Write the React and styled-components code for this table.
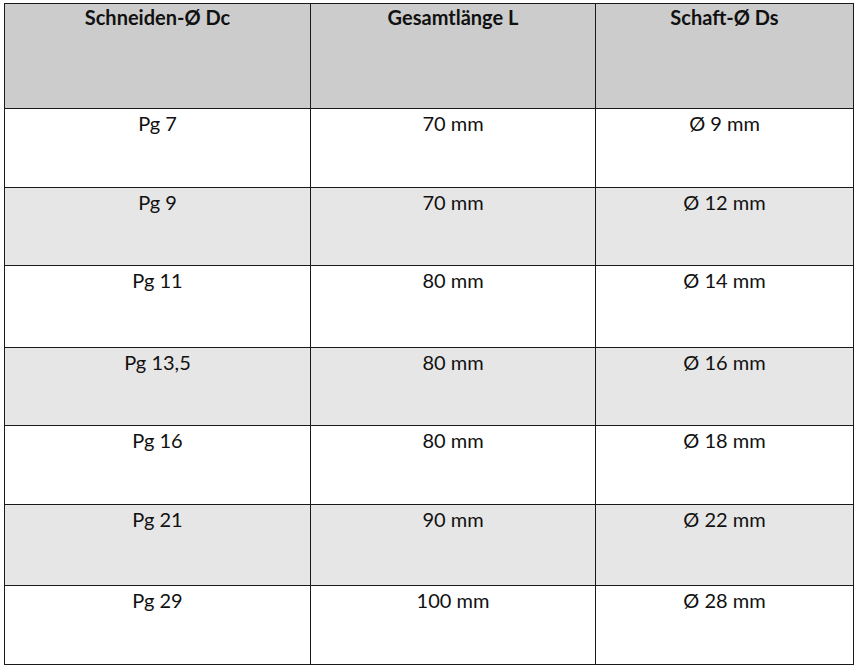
import React from "react";
import styled, { createGlobalStyle } from "styled-components";

const GlobalStyle = createGlobalStyle`
  body {
    margin: 0;
    background: #ffffff;
    font-family: Lato, "Liberation Sans", sans-serif;
    color: #111111;
  }
`;

const rows = [
  { dc: "Pg 7", l: "70 mm", ds: "Ø 9 mm", h: 79 },
  { dc: "Pg 9", l: "70 mm", ds: "Ø 12 mm", h: 78 },
  { dc: "Pg 11", l: "80 mm", ds: "Ø 14 mm", h: 82 },
  { dc: "Pg 13,5", l: "80 mm", ds: "Ø 16 mm", h: 78 },
  { dc: "Pg 16", l: "80 mm", ds: "Ø 18 mm", h: 79 },
  { dc: "Pg 21", l: "90 mm", ds: "Ø 22 mm", h: 81 },
  { dc: "Pg 29", l: "100 mm", ds: "Ø 28 mm", h: 79 },
];

const App = () => {
  return (
    <>
      <GlobalStyle />
      <Wrapper>
        <Table>
          <colgroup>
            <col style={{ width: 306 }} />
            <col style={{ width: 285 }} />
            <col style={{ width: 258 }} />
          </colgroup>
          <thead>
            <HeadRow>
              <HeadCell>Schneiden-Ø Dc</HeadCell>
              <HeadCell>Gesamtlänge L</HeadCell>
              <HeadCell>Schaft-Ø Ds</HeadCell>
            </HeadRow>
          </thead>
          <tbody>
            {rows.map((r, i) => (
              <BodyRow key={r.dc} $alt={i % 2 === 1} style={{ height: r.h }}>
                <Cell>{r.dc}</Cell>
                <Cell>{r.l}</Cell>
                <Cell>{r.ds}</Cell>
              </BodyRow>
            ))}
          </tbody>
        </Table>
      </Wrapper>
    </>
  );
};

export default App;

const Wrapper = styled.div`
  padding: 3px 0 0 4px;
`;

const Table = styled.table`
  border-collapse: collapse;
  table-layout: fixed;
  width: 850px;
`;

const HeadRow = styled.tr`
  height: 105px;
  background: #cccccc;
`;

const HeadCell = styled.th`
  border: 1px solid #1a1a1a;
  vertical-align: top;
  text-align: center;
  font-size: 20px;
  font-weight: 700;
  padding: 1px 4px 0;
  line-height: 24px;
`;

const BodyRow = styled.tr`
  background: ${(p) => (p.$alt ? "#e7e6e6" : "#ffffff")};
`;

const Cell = styled.td`
  border: 1px solid #1a1a1a;
  vertical-align: top;
  text-align: center;
  font-size: 20px;
  font-weight: 400;
  padding: 2px 4px 0;
  line-height: 24px;
`;
